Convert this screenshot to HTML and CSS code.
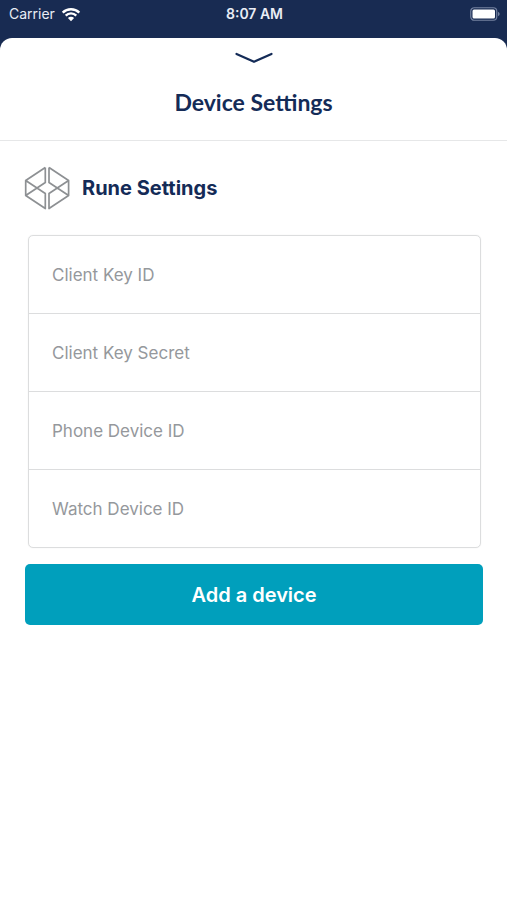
FILE: index.html
```html
<!DOCTYPE html>
<html lang="en">
<head>
<meta charset="utf-8">
<meta name="viewport" content="width=device-width, initial-scale=1">
<title>Device Settings</title>
<link rel="stylesheet" href="styles.css">
</head>
<body>
<div class="status-bar">
  <div class="carrier">
    <span>Carrier</span>
    <svg class="wifi" viewBox="0 0 20 15" aria-hidden="true">
      <path d="M1.7 5.6a11.8 11.8 0 0 1 16.6 0" />
      <path d="M4.7 8.6a7.5 7.5 0 0 1 10.6 0" />
      <path class="wifi-dot" d="M10 14.2 6.9 11.1a4.4 4.4 0 0 1 6.2 0z" />
    </svg>
  </div>
  <time class="clock">8:07 AM</time>
  <svg class="battery" viewBox="0 0 30 14" aria-hidden="true">
    <rect class="battery-case" x="0.75" y="0.75" width="26" height="12.5" rx="3.5" />
    <rect class="battery-level" x="2.5" y="2.5" width="22.5" height="9" rx="1.5" />
    <path class="battery-tip" d="M28 4.8q1.7.8 1.7 2.2T28 9.2z" />
  </svg>
</div>
<main class="sheet">
  <header class="sheet-header">
    <button class="close" type="button" aria-label="Close">
      <svg viewBox="0 0 38 12" aria-hidden="true"><path d="M1.5 2 19 9.8 36.5 2" /></svg>
    </button>
    <h1 class="title">Device Settings</h1>
  </header>
  <form class="content">
    <div class="section-heading">
      <svg class="rune-logo" viewBox="0 0 46 44" aria-hidden="true">
        <path d="M21.3 1.5 1.7 14.5V29.5L21.3 42.5V27.5L1.7 14.5M1.7 29.5 21.3 16.5V1.5" />
        <path d="M25 1.5 44.6 14.5V29.5L25 42.5V27.5L44.6 14.5M44.6 29.5 25 16.5V1.5" />
      </svg>
      <h2 class="section-title">Rune Settings</h2>
    </div>
    <div class="fields">
      <input class="field" type="text" aria-label="Client Key ID" placeholder="Client Key ID">
      <input class="field" type="text" aria-label="Client Key Secret" placeholder="Client Key Secret">
      <input class="field" type="text" aria-label="Phone Device ID" placeholder="Phone Device ID">
      <input class="field" type="text" aria-label="Watch Device ID" placeholder="Watch Device ID">
    </div>
    <button class="submit" type="button">Add a device</button>
  </form>
</main>
</body>
</html>
```

FILE: styles.css
```css
* {
  box-sizing: border-box;
}

body {
  margin: 0;
  min-height: 100vh;
  display: flex;
  flex-direction: column;
  background: #182b52;
  color: #142b57;
  font-family: Inter, "Liberation Sans", sans-serif;
}

.status-bar {
  display: grid;
  grid-template-columns: 1fr auto 1fr;
  align-items: center;
  height: 38px;
  padding: 0 7px 10px 9px;
  color: #e9edf5;
  font-size: 14px;
  line-height: 16px;
}

.carrier {
  display: flex;
  align-items: center;
  gap: 6px;
}

.wifi {
  width: 20px;
  height: 15px;
  fill: none;
  stroke: #fff;
  stroke-width: 2.4;
}

.wifi-dot {
  fill: #fff;
  stroke: none;
}

.clock {
  font-weight: 600;
}

.battery {
  justify-self: end;
  width: 30px;
  height: 14px;
}

.battery-case {
  fill: none;
  stroke: #7482a0;
  stroke-width: 1.2;
}

.battery-level {
  fill: #fff;
}

.battery-tip {
  fill: #7482a0;
}

.sheet {
  flex: 1;
  background: #fff;
  border-radius: 12px 12px 0 0;
}

.sheet-header {
  display: flex;
  flex-direction: column;
  align-items: center;
  padding: 14px 0 22px;
  border-bottom: 1px solid #e6e7e8;
}

.close {
  display: block;
  padding: 0;
  border: 0;
  background: none;
}

.close svg {
  display: block;
  width: 38px;
  height: 12px;
  fill: none;
  stroke: #142b57;
  stroke-width: 2.2;
  stroke-linecap: round;
  stroke-linejoin: round;
}

.title {
  margin: 22px 0 0;
  font-family: Lato, "Liberation Sans", sans-serif;
  font-size: 23px;
  font-weight: 700;
  line-height: 32px;
}

.content {
  padding: 25px 24px 24px 25px;
}

.section-heading {
  display: flex;
  align-items: center;
  gap: 12px;
}

.rune-logo {
  width: 46px;
  height: 44px;
  margin-left: -1px;
  fill: none;
  stroke: #8d9093;
  stroke-width: 1.7;
  stroke-linejoin: round;
}

.section-title {
  margin: 0;
  font-size: 20px;
  font-weight: 700;
  line-height: 24px;
}

.fields {
  display: flex;
  flex-direction: column;
  margin: 25px 2px 16px 3px;
  border: 1px solid #dcddde;
  border-radius: 5px;
  box-shadow: 0 0 1px #dcddde;
}

.field {
  width: 100%;
  height: 78px;
  padding: 0 23px;
  border: 0;
  border-bottom: 1px solid #dcddde;
  background: none;
  color: #142b57;
  font: inherit;
  font-size: 17px;
}

.field:last-child {
  border-bottom: 0;
  height: 77px;
}

.field::placeholder {
  color: #95989c;
  opacity: 1;
}

.submit {
  display: block;
  width: 100%;
  height: 61px;
  border: 0;
  border-radius: 5px;
  background: #009fbc;
  color: #fff;
  font: inherit;
  font-size: 20px;
  font-weight: 600;
}
```
